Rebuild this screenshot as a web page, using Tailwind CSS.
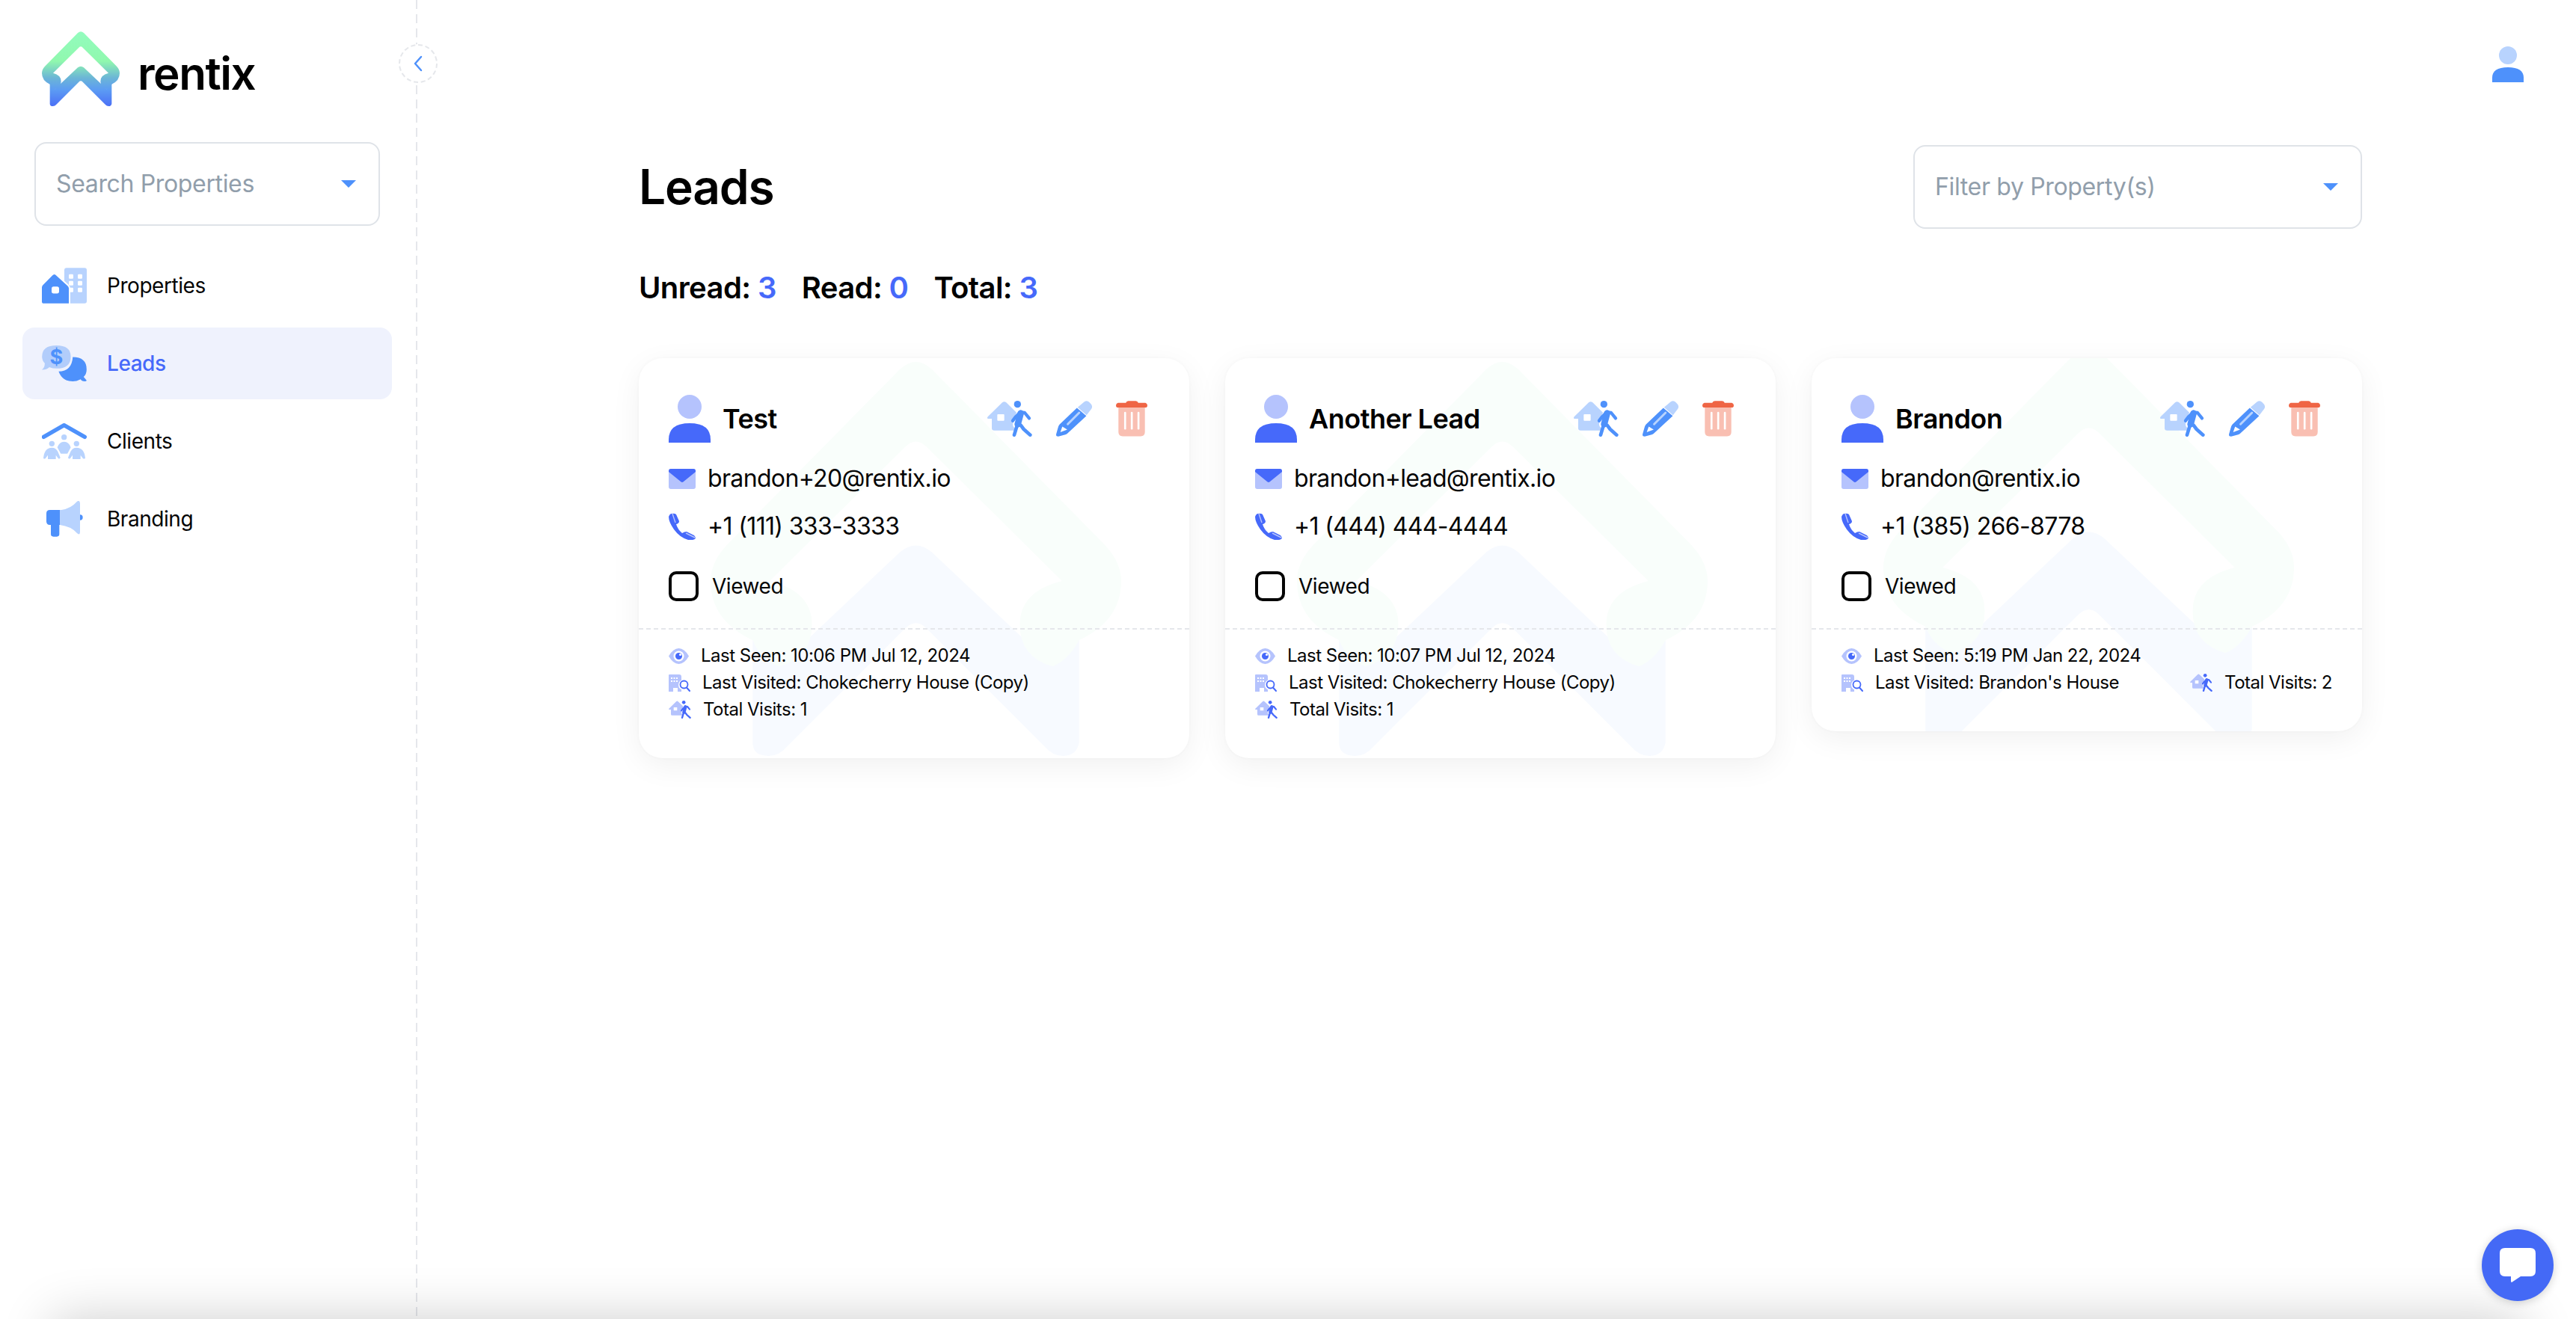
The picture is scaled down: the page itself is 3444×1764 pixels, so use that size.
<!DOCTYPE html>
<html lang="en">
<head>
<meta charset="utf-8">
<title>Leads</title>
<script src="https://cdn.jsdelivr.net/npm/@tailwindcss/browser@4"></script>
</head>
<body class="bg-white">
<svg class="absolute w-0 h-0" aria-hidden="true">
  <defs>
    <linearGradient id="lg" gradientUnits="userSpaceOnUse" x1="0" y1="65" x2="0" y2="365">
      <stop offset="0" stop-color="#93fcbe"/><stop offset="0.4" stop-color="#90f8ae"/><stop offset="0.62" stop-color="#6cb6d6"/><stop offset="0.78" stop-color="#5c9cf3"/><stop offset="1" stop-color="#4b70f6"/>
    </linearGradient>
    <symbol id="logo" viewBox="78 65 312 300">
      <path fill="url(#lg)" d="M110 270L130 297L222 210Q234 200 246 210L338 297L358 270V355Q356 365 346 365Q338 365 332 358L242 268Q234 260 226 268L136 358Q130 365 122 365Q110 365 110 355Z"/>
      <path fill="url(#lg)" d="M222 71Q234 60 246 71L378 205Q390 218 390 232Q390 262 358 277Q350 292 338 297Q313 290 313 265Q313 240 345 232L242 130Q234 122 226 130L123 232Q155 240 155 265Q155 290 130 297Q116 292 110 277Q78 262 78 232Q78 218 90 205Z"/>
    </symbol>
    <symbol id="walkA" viewBox="90 78 180 144">
      <path fill="#b8d3fe" d="M92 142L150 85Q158 78 166 85L210 128V197H118Q108 197 108 188V150H97Q86 150 92 142Z"/>
      <rect x="130" y="132" width="28" height="26" rx="3" fill="#fff"/>
      <path d="M228 126L212 172" stroke="#fff" stroke-width="40" stroke-linecap="round"/>
      <path d="M205 142L222 124L240 126L258 148M192 158L204 142" fill="none" stroke="#4e91fb" stroke-width="13" stroke-linecap="round" stroke-linejoin="round"/>
      <path d="M224 128L212 172" stroke="#4e91fb" stroke-width="26" stroke-linecap="round"/>
      <path d="M210 175L198 215M224 176L236 192L262 215" fill="none" stroke="#4e91fb" stroke-width="14" stroke-linecap="round" stroke-linejoin="round"/>
      <circle cx="211" cy="92" r="14" fill="#4e91fb"/>
    </symbol>
    <symbol id="walkB" viewBox="90 78 180 144">
      <path fill="#b5c3fd" d="M92 142L150 85Q158 78 166 85L210 128V197H118Q108 197 108 188V150H97Q86 150 92 142Z"/>
      <rect x="130" y="132" width="28" height="26" rx="3" fill="#fff"/>
      <path d="M228 126L212 172" stroke="#fff" stroke-width="40" stroke-linecap="round"/>
      <path d="M205 142L222 124L240 126L258 148M192 158L204 142" fill="none" stroke="#4669fa" stroke-width="13" stroke-linecap="round" stroke-linejoin="round"/>
      <path d="M224 128L212 172" stroke="#4669fa" stroke-width="26" stroke-linecap="round"/>
      <path d="M210 175L198 215M224 176L236 192L262 215" fill="none" stroke="#4669fa" stroke-width="14" stroke-linecap="round" stroke-linejoin="round"/>
      <circle cx="211" cy="92" r="14" fill="#4669fa"/>
    </symbol>
    <symbol id="pencil" viewBox="365 78 145 144">
      <path fill="#b8d3fe" d="M452 104L478 82Q490 74 500 84Q516 98 507 111L488 136Z"/>
      <path fill="#4e91fb" d="M449 106L487 139L412 208Q408 212 402 214L374 222Q362 222 366 210L374 182Q376 176 380 172Z"/>
      <path d="M412 172L458 126" stroke="#b8d3fe" stroke-width="9" stroke-linecap="round"/>
      <path fill="#fff" d="M382 204L390 182L410 194Z"/>
    </symbol>
    <symbol id="trash" viewBox="605 78 127 144">
      <path fill="#f9bfb2" d="M615 104H722V204Q722 221 705 221H632Q615 221 615 204Z"/>
      <path fill="#ef6545" d="M645 86Q647 78 655 78H685Q693 78 695 86H724Q732 88 732 96Q732 104 724 105H613Q605 104 605 96Q605 88 613 86Z"/>
      <rect x="638" y="122" width="8" height="72" rx="4" fill="#fff"/><rect x="665" y="122" width="8" height="72" rx="4" fill="#fff"/><rect x="692" y="122" width="8" height="72" rx="4" fill="#fff"/>
    </symbol>
    <symbol id="person" viewBox="0 0 56 64">
      <ellipse cx="28" cy="16" rx="16" ry="16" fill="#b5c3fd"/>
      <path fill="#4669fa" d="M0 64V60Q0 38 28 38Q56 38 56 60V64Z"/>
    </symbol>
    <symbol id="mail" viewBox="0 0 36 27">
      <rect width="36" height="27" rx="3" fill="#b5c3fd"/>
      <path fill="#4669fa" d="M3 0H33Q36 0 36 3V4L20 17Q18 19 16 17L0 4V3Q0 0 3 0Z"/>
    </symbol>
    <symbol id="phone" viewBox="0 0 36 36">
      <path fill="#4669fa" d="M3 1Q8 0 10 2L14 11Q14 14 10 15Q12 22 18 27Q21 25 24 25L34 30Q37 33 35 35Q31 37 26 36Q15 33 7 22Q0 12 0 5Q1 2 3 1Z"/>
      <path d="M5 1L9 13M23 27L35 33" stroke="#b5c3fd" stroke-width="1.4" fill="none"/>
    </symbol>
    <symbol id="eye" viewBox="0 0 27 21">
      <path fill="#b5c3fd" d="M0 10.5Q6 0 13.5 0Q21 0 27 10.5Q21 21 13.5 21Q6 21 0 10.5Z"/>
      <circle cx="13.5" cy="10.5" r="7" fill="#fff"/>
      <circle cx="13.5" cy="10.5" r="4.5" fill="#4669fa"/>
      <circle cx="15.5" cy="8.5" r="1.5" fill="#fff"/>
    </symbol>
    <symbol id="bsearch" viewBox="0 0 29 23">
      <path fill="#b5c3fd" d="M0 1Q0 0 1 0H14Q17 0 17 3V23H12V18H6V23H0Z"/>
      <g fill="#fff"><rect x="3" y="4" width="2" height="2"/><rect x="6.500" y="4" width="2" height="2"/><rect x="10" y="4" width="2" height="2"/><rect x="3" y="8" width="2" height="2"/><rect x="6.500" y="8" width="2" height="2"/><rect x="10" y="8" width="2" height="2"/></g>
      <circle cx="20" cy="14" r="7" fill="#fff"/>
      <circle cx="20.500" cy="13.500" r="5" fill="none" stroke="#4669fa" stroke-width="1.800"/>
      <path d="M24 17.500L28 22" stroke="#4669fa" stroke-width="2" stroke-linecap="round"/>
    </symbol>
    <symbol id="mark" viewBox="78 65 312 300">
      <path fill="#f7faff" d="M110 270L130 297L222 210Q234 200 246 210L338 297L358 270V355Q356 365 346 365Q338 365 332 358L242 268Q234 260 226 268L136 358Q130 365 122 365Q110 365 110 355Z"/>
      <path fill="#f9fefb" d="M222 71Q234 60 246 71L378 205Q390 218 390 232Q390 262 358 277Q350 292 338 297Q313 290 313 265Q313 240 345 232L242 130Q234 122 226 130L123 232Q155 240 155 265Q155 290 130 297Q116 292 110 277Q78 262 78 232Q78 218 90 205Z"/>
    </symbol>
  </defs>
</svg>

<div class="relative flex h-[1764px] w-[3444px] overflow-hidden bg-white text-[#050505] [font-family:Inter,sans-serif]">

  <!-- sidebar -->
  <aside class="relative w-[558px] shrink-0 pt-[42px]">
    <div class="flex h-[100px] items-center pl-[56px]">
      <svg class="h-[100px] w-[104px]"><use href="#logo"/></svg>
      <span class="ml-[24px] mt-[12px] text-[60px] leading-none font-semibold tracking-[-1.4px] text-black">rentix</span>
    </div>
    <div class="ml-[46px] mt-[48px] flex h-[112px] w-[462px] items-center justify-between rounded-[16px] border-2 border-[#dfe3e8] pl-[27px] pr-[30px]">
      <span class="text-[32px] tracking-[-0.35px] text-[#919eab]">Search Properties</span>
      <span class="h-0 w-0 border-x-[10px] border-t-[10px] border-x-transparent border-t-[#4e91fb]"></span>
    </div>
    <nav class="ml-[30px] mt-[32px] flex w-[494px] flex-col gap-[8px]">
      <a class="flex h-[96px] items-center pl-[26px]">
        <svg class="h-[48px] w-[60px]" viewBox="48 55 180 143">
          <rect x="138" y="55" width="90" height="143" rx="9" fill="#b8d3fe"/>
          <g fill="#fff"><rect x="156" y="81" width="18" height="18" rx="4"/><rect x="192" y="81" width="18" height="18" rx="4"/><rect x="156" y="108" width="18" height="18" rx="4"/><rect x="192" y="108" width="18" height="18" rx="4"/><rect x="156" y="135" width="18" height="18" rx="4"/><rect x="192" y="135" width="18" height="18" rx="4"/></g>
          <path fill="#4e91fb" stroke="#fff" stroke-width="6" d="M45 190V134Q45 127 50 122L90 82Q98 75 106 82L152 124Q159 130 159 137V201H56Q45 201 45 190Z"/>
          <rect x="87" y="130" width="30" height="28" rx="8" fill="#fff"/>
        </svg>
        <span class="ml-[27px] text-[28px] tracking-[-0.45px]">Properties</span>
      </a>
      <a class="flex h-[96px] items-center rounded-[16px] bg-[#eff2fd] pl-[26px]">
        <svg class="h-[48px] w-[60px]" viewBox="48 365 180 145">
          <path fill="#4e91fb" d="M172 412Q228 412 228 462Q228 482 216 492L228 506Q228 510 220 510Q208 510 204 502Q190 510 172 510Q130 510 115 470Q168 470 172 412Z"/>
          <path fill="#b2cdfb" stroke="#eff2fd" stroke-width="6" d="M106 362Q167 362 167 410Q167 461 106 461Q90 461 78 456Q68 466 50 466Q44 466 46 460Q56 452 56 438Q45 426 45 410Q45 362 106 362Z"/>
          <text x="106" y="441" text-anchor="middle" font-size="82" font-weight="700" fill="#4e91fb" font-family="Inter, sans-serif">$</text>
        </svg>
        <span class="ml-[27px] text-[28px] font-medium tracking-[-0.45px] text-[#4669fa]">Leads</span>
      </a>
      <a class="flex h-[96px] items-center pl-[26px]">
        <svg class="h-[48px] w-[60px]" viewBox="48 678 180 144">
          <path d="M55 733L137 686L220 733" fill="none" stroke="#4e91fb" stroke-width="16" stroke-linecap="round" stroke-linejoin="round"/>
          <g fill="#b8d3fe">
            <circle cx="137" cy="734" r="11"/><circle cx="88" cy="760" r="11"/><circle cx="187" cy="760" r="11"/>
            <path d="M110 775Q118 752 137 752Q156 752 164 775L156 790L152 797Q152 800 148 800H126Q122 800 122 797L118 790Z"/>
            <path d="M54 818Q58 776 88 776Q104 776 112 792L122 816Q120 822 114 820L104 806V822H72V806L62 820Q56 822 54 818Z"/>
            <path d="M222 818Q218 776 187 776Q171 776 163 792L153 816Q155 822 161 820L171 806V822H203V806L213 820Q219 822 222 818Z"/>
          </g>
        </svg>
        <span class="ml-[27px] text-[28px] tracking-[-0.45px]">Clients</span>
      </a>
      <a class="flex h-[96px] items-center pl-[26px]">
        <svg class="h-[48px] w-[60px]" viewBox="48 990 180 144">
          <circle cx="201" cy="1056" r="11" fill="#4e91fb"/>
          <path fill="#4e91fb" d="M80 1026H120V1086H118V1123Q118 1133 108 1133H94Q84 1133 84 1123V1086H80Q66 1086 66 1072V1040Q66 1026 80 1026Z"/>
          <path fill="#b8d3fe" d="M120 1026H126Q165 1020 188 993Q200 984 201 1000V1115Q200 1130 188 1118Q165 1092 120 1086Z"/>
        </svg>
        <span class="ml-[27px] text-[28px] tracking-[-0.45px]">Branding</span>
      </a>
    </nav>
    <!-- dashed divider -->
    <div class="absolute right-0 top-0 h-full w-[2px] bg-[repeating-linear-gradient(to_bottom,#e5e7eb_0,#e5e7eb_12px,transparent_12px,transparent_19px)]"></div>
    <button class="absolute left-[533px] top-[59px] flex h-[52px] w-[52px] items-center justify-center rounded-full border-2 border-dashed border-[#e5e7eb] bg-white">
      <svg class="h-[22px] w-[12px]" viewBox="0 0 12 22"><path d="M10 2L2 11L10 20" fill="none" stroke="#4e91fb" stroke-width="2.500" stroke-linecap="round" stroke-linejoin="round"/></svg>
    </button>
  </aside>

  <!-- main -->
  <main class="relative flex-1 pl-[296px] pt-[194px]">
    <div class="w-[2304px]">
      <div class="flex h-[112px] items-center justify-between">
        <h1 class="text-[64px] leading-none font-semibold tracking-[-1.2px] text-black">Leads</h1>
        <div class="flex h-[112px] w-[600px] items-center justify-between rounded-[16px] border-2 border-[#dfe3e8] pl-[27px] pr-[30px]">
          <span class="text-[32px] tracking-[-0.35px] text-[#919eab]">Filter by Property(s)</span>
          <span class="h-0 w-0 border-x-[10px] border-t-[10px] border-x-transparent border-t-[#4e91fb]"></span>
        </div>
      </div>
      <div class="mt-[54px] flex h-[50px] items-center text-[40px] font-semibold tracking-[-0.6px] text-black">
        <span>Unread: <span class="text-[#4669fa]">3</span></span>
        <span class="ml-[34px]">Read: <span class="text-[#4669fa]">0</span></span>
        <span class="ml-[34px]">Total: <span class="text-[#4669fa]">3</span></span>
      </div>
      <div class="mt-[69px] grid grid-cols-3 items-start gap-[48px]">

        <article class="relative overflow-hidden rounded-[32px] bg-white shadow-[0_10px_40px_rgba(0,0,0,0.06),0_0_4px_rgba(0,0,0,0.03)]">
          <svg class="absolute left-[96px] top-1/2 h-[528px] w-[549px] -translate-y-1/2"><use href="#mark"/></svg>
          <div class="relative">
            <div class="px-[40px] pt-[49px]">
              <div class="flex h-[64px] items-center">
                <svg class="h-[64px] w-[56px]"><use href="#person"/></svg>
                <span class="ml-[16px] flex-1 text-[36px] font-semibold tracking-[-0.5px] text-black">Test</span>
                <div class="mr-[16px] flex items-center">
                  <svg class="h-[48px] w-[60px]"><use href="#walkA"/></svg>
                  <svg class="ml-[32px] h-[48px] w-[48px]"><use href="#pencil"/></svg>
                  <svg class="ml-[32px] h-[48px] w-[42px]"><use href="#trash"/></svg>
                </div>
              </div>
              <div class="mt-[24px] flex h-[48px] items-center"><svg class="h-[27px] w-[36px]"><use href="#mail"/></svg><span class="ml-[16px] text-[32px] tracking-[-0.65px]">brandon+20@rentix.io</span></div>
              <div class="mt-[16px] flex h-[48px] items-center"><svg class="h-[36px] w-[36px]"><use href="#phone"/></svg><span class="ml-[16px] text-[32px] tracking-[-0.65px]">+1 (111) 333-3333</span></div>
              <div class="mt-[36px] flex h-[40px] items-center"><span class="h-[40px] w-[40px] rounded-[10px] border-[4px] border-[#050505]"></span><span class="ml-[18px] text-[28px] tracking-[-0.45px]">Viewed</span></div>
            </div>
            <div class="mt-[36px] border-t-2 border-dashed border-[#e5e7eb] px-[40px] pb-[47px] pt-[17px] text-[24px] tracking-[-0.5px]">
              <div class="flex h-[36px] items-center"><svg class="h-[21px] w-[27px]"><use href="#eye"/></svg><span class="ml-[16px]">Last Seen: 10:06 PM Jul 12, 2024</span></div>
              <div class="flex h-[36px] items-center"><svg class="h-[23px] w-[29px]"><use href="#bsearch"/></svg><span class="ml-[16px]">Last Visited: Chokecherry House (Copy)</span></div>
              <div class="flex h-[36px] items-center"><svg class="h-[24px] w-[30px]"><use href="#walkB"/></svg><span class="ml-[16px]">Total Visits: 1</span></div>
            </div>
          </div>
        </article>

        <article class="relative overflow-hidden rounded-[32px] bg-white shadow-[0_10px_40px_rgba(0,0,0,0.06),0_0_4px_rgba(0,0,0,0.03)]">
          <svg class="absolute left-[96px] top-1/2 h-[528px] w-[549px] -translate-y-1/2"><use href="#mark"/></svg>
          <div class="relative">
            <div class="px-[40px] pt-[49px]">
              <div class="flex h-[64px] items-center">
                <svg class="h-[64px] w-[56px]"><use href="#person"/></svg>
                <span class="ml-[16px] flex-1 text-[36px] font-semibold tracking-[-0.5px] text-black">Another Lead</span>
                <div class="mr-[16px] flex items-center">
                  <svg class="h-[48px] w-[60px]"><use href="#walkA"/></svg>
                  <svg class="ml-[32px] h-[48px] w-[48px]"><use href="#pencil"/></svg>
                  <svg class="ml-[32px] h-[48px] w-[42px]"><use href="#trash"/></svg>
                </div>
              </div>
              <div class="mt-[24px] flex h-[48px] items-center"><svg class="h-[27px] w-[36px]"><use href="#mail"/></svg><span class="ml-[16px] text-[32px] tracking-[-0.65px]">brandon+lead@rentix.io</span></div>
              <div class="mt-[16px] flex h-[48px] items-center"><svg class="h-[36px] w-[36px]"><use href="#phone"/></svg><span class="ml-[16px] text-[32px] tracking-[-0.65px]">+1 (444) 444-4444</span></div>
              <div class="mt-[36px] flex h-[40px] items-center"><span class="h-[40px] w-[40px] rounded-[10px] border-[4px] border-[#050505]"></span><span class="ml-[18px] text-[28px] tracking-[-0.45px]">Viewed</span></div>
            </div>
            <div class="mt-[36px] border-t-2 border-dashed border-[#e5e7eb] px-[40px] pb-[47px] pt-[17px] text-[24px] tracking-[-0.5px]">
              <div class="flex h-[36px] items-center"><svg class="h-[21px] w-[27px]"><use href="#eye"/></svg><span class="ml-[16px]">Last Seen: 10:07 PM Jul 12, 2024</span></div>
              <div class="flex h-[36px] items-center"><svg class="h-[23px] w-[29px]"><use href="#bsearch"/></svg><span class="ml-[16px]">Last Visited: Chokecherry House (Copy)</span></div>
              <div class="flex h-[36px] items-center"><svg class="h-[24px] w-[30px]"><use href="#walkB"/></svg><span class="ml-[16px]">Total Visits: 1</span></div>
            </div>
          </div>
        </article>

        <article class="relative overflow-hidden rounded-[32px] bg-white shadow-[0_10px_40px_rgba(0,0,0,0.06),0_0_4px_rgba(0,0,0,0.03)]">
          <svg class="absolute left-[96px] top-1/2 h-[528px] w-[549px] -translate-y-1/2"><use href="#mark"/></svg>
          <div class="relative">
            <div class="px-[40px] pt-[49px]">
              <div class="flex h-[64px] items-center">
                <svg class="h-[64px] w-[56px]"><use href="#person"/></svg>
                <span class="ml-[16px] flex-1 text-[36px] font-semibold tracking-[-0.5px] text-black">Brandon</span>
                <div class="mr-[16px] flex items-center">
                  <svg class="h-[48px] w-[60px]"><use href="#walkA"/></svg>
                  <svg class="ml-[32px] h-[48px] w-[48px]"><use href="#pencil"/></svg>
                  <svg class="ml-[32px] h-[48px] w-[42px]"><use href="#trash"/></svg>
                </div>
              </div>
              <div class="mt-[24px] flex h-[48px] items-center"><svg class="h-[27px] w-[36px]"><use href="#mail"/></svg><span class="ml-[16px] text-[32px] tracking-[-0.65px]">brandon@rentix.io</span></div>
              <div class="mt-[16px] flex h-[48px] items-center"><svg class="h-[36px] w-[36px]"><use href="#phone"/></svg><span class="ml-[16px] text-[32px] tracking-[-0.65px]">+1 (385) 266-8778</span></div>
              <div class="mt-[36px] flex h-[40px] items-center"><span class="h-[40px] w-[40px] rounded-[10px] border-[4px] border-[#050505]"></span><span class="ml-[18px] text-[28px] tracking-[-0.45px]">Viewed</span></div>
            </div>
            <div class="mt-[36px] border-t-2 border-dashed border-[#e5e7eb] px-[40px] pb-[47px] pt-[17px] text-[24px] tracking-[-0.5px]">
              <div class="flex h-[36px] items-center"><svg class="h-[21px] w-[27px]"><use href="#eye"/></svg><span class="ml-[16px]">Last Seen: 5:19 PM Jan 22, 2024</span></div>
              <div class="flex h-[36px] items-center justify-between">
                <div class="flex items-center"><svg class="h-[23px] w-[29px]"><use href="#bsearch"/></svg><span class="ml-[16px]">Last Visited: Brandon's House</span></div>
                <div class="flex items-center"><svg class="h-[24px] w-[30px]"><use href="#walkB"/></svg><span class="ml-[16px]">Total Visits: 2</span></div>
              </div>
            </div>
          </div>
        </article>

      </div>
    </div>
    <svg class="absolute right-[70px] top-[62px] h-[48px] w-[42px]" viewBox="0 0 42 48">
      <ellipse cx="21" cy="12" rx="12" ry="12" fill="#b8d3fe"/>
      <path fill="#4e91fb" d="M0 48V42Q0 28 21 28Q42 28 42 42V48Z"/>
    </svg>
  </main>

  <!-- bottom edge shadow -->
  <div class="absolute left-[70px] right-[70px] top-full h-[100px] shadow-[0_0_70px_rgba(0,0,0,0.2)]"></div>

  <!-- chat button -->
  <button class="absolute left-[3318px] top-[1644px] flex h-[96px] w-[96px] items-center justify-center rounded-full bg-[#4469f6] shadow-[0_2px_12px_rgba(0,0,0,0.18)]">
    <svg class="h-[46px] w-[48px]" viewBox="0 0 48 46"><path fill="#fff" d="M7 0H41Q48 0 48 7V31Q48 38 41 38H28L16 46Q15 46 15 44V38H7Q0 38 0 31V7Q0 0 7 0Z"/></svg>
  </button>
</div>
</body>
</html>
